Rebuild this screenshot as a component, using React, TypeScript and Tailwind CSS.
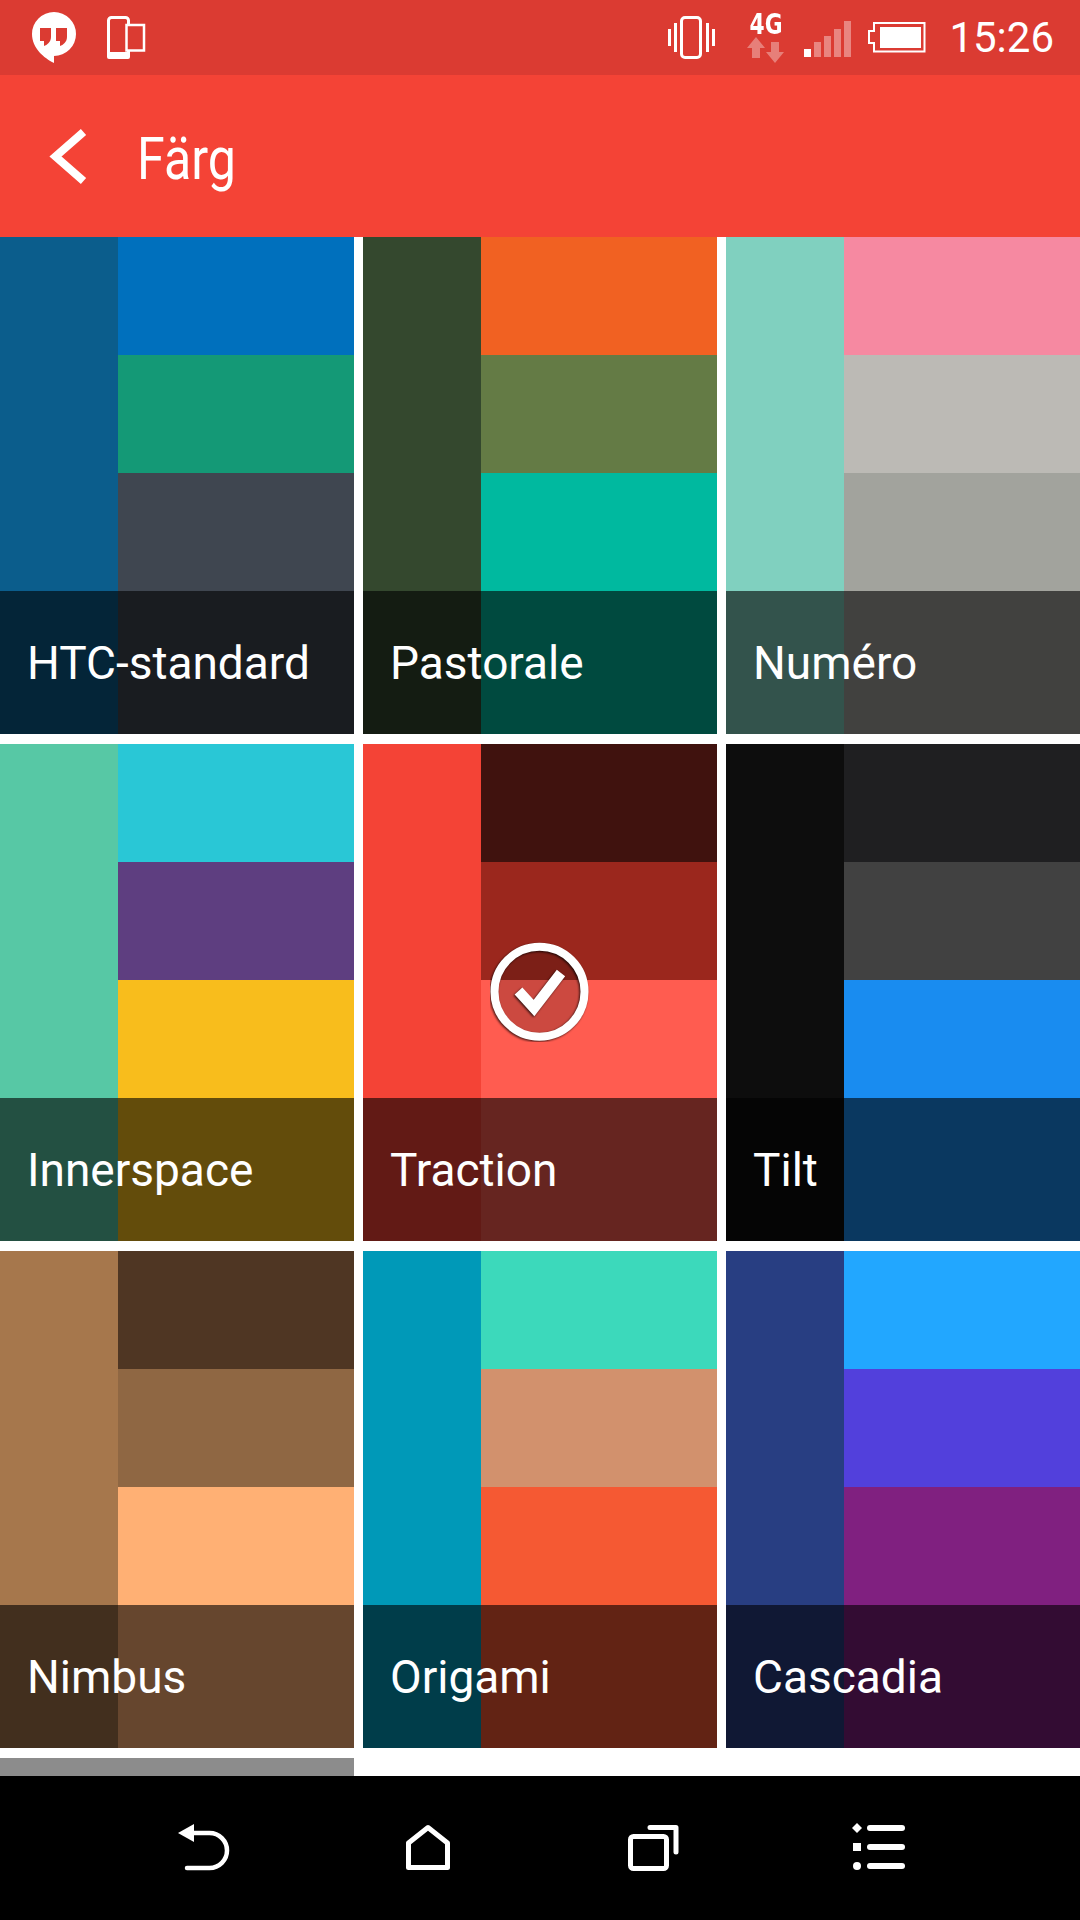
import React from "react";

type Theme = {
  name: string;
  left: string;
  top: string;
  mid: string;
  bottom: string;
  selected?: boolean;
};

const themes: Theme[] = [
  { name: "HTC-standard", left: "bg-[#0b5d8c]", top: "bg-[#0070bd]", mid: "bg-[#149976]", bottom: "bg-[#3f4650]" },
  { name: "Pastorale", left: "bg-[#34482e]", top: "bg-[#f16122]", mid: "bg-[#647b45]", bottom: "bg-[#00b99f]" },
  { name: "Numéro", left: "bg-[#80d0bf]", top: "bg-[#f689a1]", mid: "bg-[#bcbab5]", bottom: "bg-[#a2a39d]" },
  { name: "Innerspace", left: "bg-[#57c8a5]", top: "bg-[#29c7d6]", mid: "bg-[#5e3e80]", bottom: "bg-[#f8bd1c]" },
  { name: "Traction", left: "bg-[#f44336]", top: "bg-[#40120e]", mid: "bg-[#9b271d]", bottom: "bg-[#ff5c50]", selected: true },
  { name: "Tilt", left: "bg-[#0d0d0d]", top: "bg-[#1f1f21]", mid: "bg-[#414141]", bottom: "bg-[#198cf0]" },
  { name: "Nimbus", left: "bg-[#a6774c]", top: "bg-[#4f3623]", mid: "bg-[#8f6743]", bottom: "bg-[#ffb074]" },
  { name: "Origami", left: "bg-[#0099b8]", top: "bg-[#3cd9bb]", mid: "bg-[#d2916d]", bottom: "bg-[#f55933]" },
  { name: "Cascadia", left: "bg-[#283e82]", top: "bg-[#22a7ff]", mid: "bg-[#5240dc]", bottom: "bg-[#802080]" },
];

function Tile({ t }: { t: Theme }) {
  return (
    <div className="relative flex h-[497px]">
      <div className={`w-[118px] ${t.left}`} />
      <div className="flex flex-1 flex-col">
        <div className={`h-[118px] ${t.top}`} />
        <div className={`h-[118px] ${t.mid}`} />
        <div className={`flex-1 ${t.bottom}`} />
      </div>
      <div className="absolute inset-x-0 bottom-0 flex h-[143px] items-center bg-black/60 pl-[27px] text-[46px] leading-none text-white">
        {t.name}
      </div>
      {t.selected && (
        <svg className="absolute left-[127px] top-[198px]" width="100" height="100" viewBox="0 0 100 100">
          <circle cx="49.5" cy="49.7" r="45" fill="rgba(0,0,0,0.2)" />
          <g className="drop-shadow-[-0.5px_1.5px_1px_rgba(0,0,0,0.75)]">
            <circle cx="49.5" cy="49.7" r="45" fill="none" stroke="#fff" strokeWidth="8" />
            <path d="M28.5 49 L44 66 L71 31" fill="none" stroke="#fff" strokeWidth="10.5" />
          </g>
        </svg>
      )}
    </div>
  );
}

export default function App() {
  return (
    <div className="flex h-[1920px] w-[1080px] flex-col overflow-hidden bg-white font-['Roboto',sans-serif]">
      {/* status bar */}
      <div className="flex h-[75px] items-center bg-[#db3b32] text-white">
        <svg className="ml-[30px]" width="50" height="75" viewBox="30 0 50 75">
          <path d="M54 12 a22 22 0 0 1 0 44 V63 C44 58 32 48 32 34 A22 22 0 0 1 54 12 Z" fill="#fff" />
          <path d="M40 28 H51 V37 C51 42 47 45 44 46 V41 H40 Z M56 28 H67 V37 C67 42 63 45 60 46 V41 H56 Z" fill="#db3b32" />
        </svg>
        <svg className="ml-[24px]" width="44" height="75" viewBox="104 0 44 75">
          <rect x="108.5" y="17.5" width="20" height="40" rx="3" fill="none" stroke="#fff" strokeWidth="3" />
          <rect x="107" y="52" width="23" height="7" rx="2" fill="#fff" />
          <rect x="126.5" y="25" width="17.5" height="25.5" fill="#db3b32" stroke="#fff" strokeWidth="2.5" />
        </svg>
        <div className="flex-1" />
        <svg width="50" height="75" viewBox="668 0 50 75" fill="#fff">
          <path d="M669 29h3v17h-3zM675 23h3v29h-3zM707 23h3v29h-3zM713 29h3v17h-3z" />
          <rect x="682.5" y="17.5" width="19" height="40" rx="3.5" fill="none" stroke="#fff" strokeWidth="3" />
        </svg>
        <div className="ml-[29px] flex w-[40px] flex-col items-center">
          <span className="h-[24px] scale-x-[0.75] font-['DejaVu_Sans',sans-serif] text-[29px] font-bold leading-[24px]">4G</span>
          <svg width="40" height="28" viewBox="746 36 40 28" fill="#fff" fillOpacity="0.35">
            <path d="M756 37 L765 48 H760 V58 H752 V48 H747 Z M771 42 H779 V52 H784 L775 63 L766 52 H771 Z" />
          </svg>
        </div>
        <svg className="ml-[17px]" width="50" height="75" viewBox="804 0 50 75" fill="#fff">
          <rect x="805" y="49" width="7" height="8" />
          <g fillOpacity="0.38">
            <rect x="815" y="42" width="7" height="15" />
            <rect x="825" y="36" width="7" height="21" />
            <rect x="835" y="29" width="7" height="28" />
            <rect x="845" y="21" width="7" height="36" />
          </g>
        </svg>
        <svg className="ml-[14px]" width="60" height="75" viewBox="868 0 60 75">
          <path d="M875 23 H925.5 V51.5 H875 V43 H870 V31 H875 Z" fill="none" stroke="#fff" strokeWidth="2" />
          <rect x="881" y="27" width="41" height="21" fill="#fff" />
        </svg>
        <span className="ml-[22px] mr-[26px] text-[42px] leading-none">15:26</span>
      </div>

      {/* header */}
      <div className="flex h-[162px] items-center bg-[#f44336] text-white">
        <svg className="ml-[46px]" width="44" height="62" viewBox="46 124 44 62">
          <path d="M83.5 131 L55.5 155.5 L83.5 180" fill="none" stroke="#fff" strokeWidth="8" />
        </svg>
        <span className="ml-[47px] mt-[4px] origin-left scale-x-[0.85] text-[59px] leading-none">Färg</span>
      </div>

      {/* grid */}
      <div className="min-h-0 flex-1 overflow-hidden">
        <div className="grid grid-cols-3 gap-x-[9px] gap-y-[10px]">
          {themes.map((t) => (
            <Tile key={t.name} t={t} />
          ))}
          <div className="h-[497px] bg-[#8c8c8c]" />
        </div>
      </div>

      {/* nav */}
      <div className="flex h-[144px] items-center justify-center bg-black">
        <div className="flex w-[225px] justify-center">
          <svg width="60" height="60" viewBox="0 0 60 60" fill="none" stroke="#fff" strokeWidth="4.5" strokeLinecap="round">
            <path d="M5 15 L21 6 V24 Z" fill="#fff" stroke="none" />
            <path d="M21 15 H36.5 A17.5 17.5 0 0 1 36.5 50 H14" />
          </svg>
        </div>
        <div className="flex w-[225px] justify-center">
          <svg width="60" height="60" viewBox="0 0 60 60" fill="none" stroke="#fff" strokeWidth="5" strokeLinejoin="round">
            <path d="M30 9.5 L49.5 25 V49.5 H10.5 V25 Z" />
          </svg>
        </div>
        <div className="flex w-[225px] justify-center">
          <svg width="60" height="60" viewBox="0 0 60 60" fill="none" stroke="#fff" strokeWidth="5" strokeLinecap="round" strokeLinejoin="round">
            <rect x="7.5" y="18.5" width="36" height="32" rx="3" />
            <path d="M27 9.5 H53 V34" />
          </svg>
        </div>
        <div className="flex w-[225px] justify-center">
          <svg width="60" height="60" viewBox="0 0 60 60" fill="#fff">
            <path d="M9 5 L14 10 L9 15 L4 10 Z" />
            <rect x="5" y="25" width="8" height="8" />
            <circle cx="9" cy="48" r="4" />
            <rect x="19" y="7" width="38" height="6" rx="3" />
            <rect x="19" y="26" width="38" height="6" rx="3" />
            <rect x="19" y="45" width="38" height="6" rx="3" />
          </svg>
        </div>
      </div>
    </div>
  );
}
